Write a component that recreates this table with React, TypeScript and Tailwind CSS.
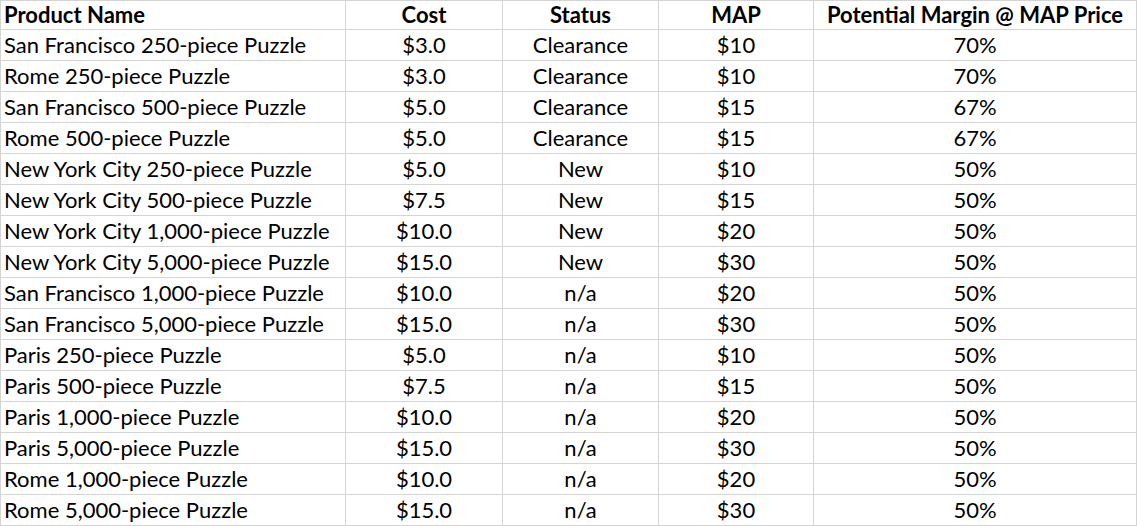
const rows: [string, string, string, string, string][] = [
  ["San Francisco 250-piece Puzzle", "$3.0", "Clearance", "$10", "70%"],
  ["Rome 250-piece Puzzle", "$3.0", "Clearance", "$10", "70%"],
  ["San Francisco 500-piece Puzzle", "$5.0", "Clearance", "$15", "67%"],
  ["Rome 500-piece Puzzle", "$5.0", "Clearance", "$15", "67%"],
  ["New York City 250-piece Puzzle", "$5.0", "New", "$10", "50%"],
  ["New York City 500-piece Puzzle", "$7.5", "New", "$15", "50%"],
  ["New York City 1,000-piece Puzzle", "$10.0", "New", "$20", "50%"],
  ["New York City 5,000-piece Puzzle", "$15.0", "New", "$30", "50%"],
  ["San Francisco 1,000-piece Puzzle", "$10.0", "n/a", "$20", "50%"],
  ["San Francisco 5,000-piece Puzzle", "$15.0", "n/a", "$30", "50%"],
  ["Paris 250-piece Puzzle", "$5.0", "n/a", "$10", "50%"],
  ["Paris 500-piece Puzzle", "$7.5", "n/a", "$15", "50%"],
  ["Paris 1,000-piece Puzzle", "$10.0", "n/a", "$20", "50%"],
  ["Paris 5,000-piece Puzzle", "$15.0", "n/a", "$30", "50%"],
  ["Rome 1,000-piece Puzzle", "$10.0", "n/a", "$20", "50%"],
  ["Rome 5,000-piece Puzzle", "$15.0", "n/a", "$30", "50%"],
];

const headers = ["Product Name", "Cost", "Status", "MAP", "Potential Margin @ MAP Price"];

export default function App() {
  return (
    <div className="bg-white w-[1138px] h-[526px] overflow-hidden font-['Lato',sans-serif] text-[22px] text-black">
      <div className="grid grid-cols-[344px_156px_155px_154px_322px] grid-rows-[28px_repeat(16,30px)] gap-px bg-[#d4d4d4] border border-[#d4d4d4] w-fit">
        {headers.map((h, i) => (
          <div
            key={h}
            className={`bg-white font-bold flex items-end pb-[3px] leading-none ${i === 0 ? "pl-[3px]" : "justify-center"}`}
          >
            {h}
          </div>
        ))}
        {rows.map((r) =>
          r.map((c, i) => (
            <div
              key={r[0] + i}
              className={`bg-white flex items-end pb-[4px] leading-none ${i === 0 ? "pl-[3px]" : "justify-center"}`}
            >
              {c}
            </div>
          ))
        )}
      </div>
    </div>
  );
}
